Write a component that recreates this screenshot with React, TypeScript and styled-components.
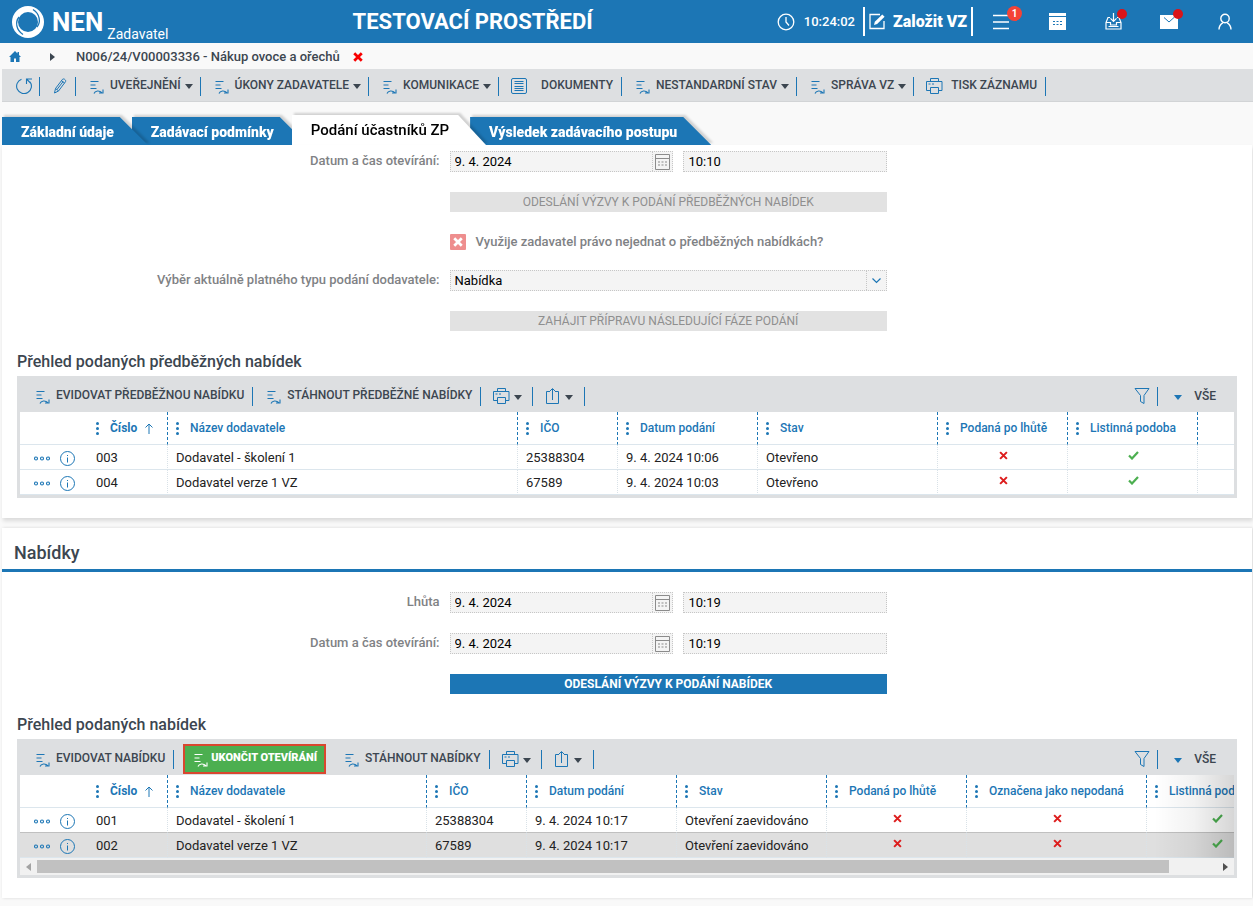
import React from 'react';
import styled, { createGlobalStyle, css } from 'styled-components';

const c = {
  blue: '#1c76b5',
  ink: '#3c4650',
  bar: '#dddfe1',
  page: '#f9f9f9',
  label: '#7f8285',
  red: '#dd1c1c',
  green: '#4caf50',
};

const Global = createGlobalStyle`
  *, *::before, *::after { box-sizing: border-box; }
  body {
    margin: 0;
    background: ${c.page};
    color: #222;
    font: 13px/16px Roboto, "Open Sans", sans-serif;
    overflow-x: hidden;
  }
  button, input, select { font: inherit; color: inherit; margin: 0; }
  button { border: 0; background: none; padding: 0; cursor: pointer; }
  svg { display: block; flex: none; }
  h1, h2, h3, p { margin: 0; }
`;

/* ---------- icons ---------- */

const Svg = ({ w = 16, h = 16, color = c.blue, sw = 1, children }: any) => (
  <svg width={w} height={h} viewBox={`0 0 ${w} ${h}`} fill="none" stroke={color} strokeWidth={sw} aria-hidden="true">
    {children}
  </svg>
);

const LogoMark = () => (
  <svg width="32" height="32" viewBox="0 0 32 32" aria-hidden="true">
    <circle cx="16" cy="16" r="16" fill="#fff" />
    <circle cx="16" cy="16" r="10" fill={c.blue} />
    <path d="M7 11C3 16 4 24 11 28.500" fill="none" stroke={c.blue} strokeWidth="1.300" />
    <path d="M25 21C29 16 28 8 21 3.500" fill="none" stroke={c.blue} strokeWidth="1.300" />
  </svg>
);

const ClockIcon = () => (
  <Svg w={18} h={18} color="#fff" sw={1.3}><circle cx="9" cy="9" r="7.800" /><path d="M9 4v5l3 3.500" /></Svg>
);
const EditIcon = () => (
  <Svg w={17} h={17} color="#fff" sw={1.3}>
    <path d="M11 1.500H1v14h14V8" />
    <path d="M5 12l.8-3.200 7.500-7.300 2.300 2.300-7.500 7.300z" fill="#fff" stroke="none" />
  </Svg>
);
const MenuIcon = () => <Svg w={18} h={16} color="#fff" sw={1.6}><path d="M1 1.500h16M1 8h16M1 14.500h16" /></Svg>;
const HeaderCalendarIcon = () => (
  <Svg w={17} h={17} color="none">
    <path d="M0 0h17v3H0zM0 4h17v13H0z" fill="#fff" />
    <path d="M4 8h2v1H4zM7.500 8h2v1h-2zM11 8h2v1h-2zM4 11h2v1H4zM7.500 11h2v1h-2zM11 11h2v1h-2z" fill={c.blue} />
  </Svg>
);
const InboxIcon = () => (
  <Svg w={17} h={17} color="#fff" sw={1.2}>
    <path d="M5 4.500H3L1 9.500v6.500h15V9.500l-2-5h-2M1 9.500h4.500V12h6V9.500H16M8.500 0v8M5.500 5.300l3 3 3-3M3.500 13.500h10" />
  </Svg>
);
const MailIcon = () => (
  <Svg w={18} h={14} color={c.blue} sw={1}><path d="M0 0h18v14H0z" fill="#fff" stroke="none" /><path d="M4 2.500l5 4.500 5-4.500" /></Svg>
);
const UserIcon = () => (
  <Svg w={14} h={17} color="#fff" sw={1.4}><circle cx="7" cy="5.500" r="4.200" /><path d="M1 16.500c0-4 2-5.500 4-6.800M13 16.500c0-4-2-5.500-4-6.800" /></Svg>
);
const HomeIcon = () => (
  <Svg w={12} h={11} color="none"><path d="M6 0L0 6h1.500v5H5V7.500h2V11h3.500V6H12L10 4V1H8.500v1.500z" fill={c.blue} /></Svg>
);
const CrossIcon = ({ size = 8, color = c.red, sw = 2.2 }: { size?: number; color?: string; sw?: number }) => (
  <svg width={size} height={size} viewBox="0 0 8 8" aria-hidden="true">
    <path d="M1 1l6 6M7 1L1 7" stroke={color} strokeWidth={sw} fill="none" />
  </svg>
);
const CheckIcon = () => <Svg w={11} h={9} color={c.green} sw={2.2}><path d="M1 4.500l3 3L10 1" /></Svg>;
const RefreshIcon = () => (
  <Svg sw={1.1}><path d="M5.500 1.200A7.400 7.400 0 1 0 14 3.800M16 1h-5.500v5M10.500 1l4 4" /></Svg>
);
const PencilIcon = () => (
  <Svg sw={1}><path d="M2.500 15l1-4.500L10.500 1.300c1.200-1.200 4 .8 3 2.400L6.500 13zM3.500 10.500l3 2.300M9.500 2.700l3 2.300M5 11.500l6-7.800" /></Svg>
);
const FlowIcon = ({ color = c.blue }: { color?: string }) => (
  <Svg color={color} sw={1.1}>
    <path d="M2.500 3.500h8M2.500 7h5M2.500 10.500h6" />
    <path d="M6 15.500c1-3 5.500-3.500 7.800-.8M15 11.500v3.500h-4" />
  </Svg>
);
const DocumentIcon = () => (
  <Svg w={17}><rect x="0.500" y="0.500" width="15" height="15" rx="1.500" /><path d="M3.500 3.500h9M3.500 5.500h9M3.500 8.500h9M3.500 10.500h9M3.500 12.500h9" /></Svg>
);
const PrinterIcon = () => (
  <Svg w={17}>
    <path d="M4.500 3.500v-3h8v3M4.500 12.500h-4v-9h15.500v9h-3.500M4.500 9.500h8v6h-8zM2.500 6h2M6 6h2" />
  </Svg>
);
const ShareIcon = () => <Svg><path d="M5 3.500H1.500v12h12v-12H10M7.500 12V1M4.500 3.500l3-3 3 3" /></Svg>;
const FilterIcon = () => <Svg><path d="M1 .5h14L10 7.500v8L6.500 13.500V7.500z" /></Svg>;
const CalendarIcon = () => (
  <Svg w={15} color="#8b8b8b">
    <path d="M.5 15.500V.5h14v15zM.5 4.500h14" />
    <path d="M3 8h2M6.500 8h2M10 8h2M3 11h2M6.500 11h2M10 11h2" />
  </Svg>
);
const ArrowUpIcon = () => <Svg w={8} h={11}><path d="M4 11V1M.5 4.500L4 1l3.500 3.500" /></Svg>;
const RowMenuIcon = () => <Svg w={16} h={5} sw={1.1}><circle cx="2" cy="2.500" r="1.500" /><circle cx="8" cy="2.500" r="1.500" /><circle cx="14" cy="2.500" r="1.500" /></Svg>;
const InfoIcon = () => <Svg w={15} h={15}><circle cx="7.500" cy="7.500" r="7" /><path d="M7.500 6.500v5M7.500 4v1" /></Svg>;
const DotsIcon = () => <Svg w={3} h={13} color="none"><g fill={c.blue}><circle cx="1.500" cy="1.500" r="1.500" /><circle cx="1.500" cy="6.500" r="1.500" /><circle cx="1.500" cy="11.500" r="1.500" /></g></Svg>;
const ChevronIcon = () => <Svg w={9} h={6} sw={1.2}><path d="M.5 .5l4 4 4-4" /></Svg>;

const Caret = styled.span<{ $color?: string }>`
  margin-top: 2px;
  border: 4px solid transparent;
  border-top: 5px solid ${p => p.$color || c.ink};
  border-bottom: 0;
`;

/* ---------- header ---------- */

const Header = styled.header`
  display: flex;
  align-items: center;
  height: 43px;
  background: ${c.blue};
  color: #fff;
`;
const Brand = styled.a`
  display: flex;
  align-items: center;
  gap: 8px;
  padding-left: 12px;
  color: #fff;
  text-decoration: none;
`;
const BrandName = styled.span`
  display: flex;
  align-items: flex-end;
  gap: 4px;
  font: 700 26px/32px Roboto, sans-serif;
`;
const BrandRole = styled.small`
  font: 400 14px/16px Roboto, sans-serif;
  margin-bottom: -4px;
`;
const EnvTitle = styled.h1`
  flex: 1;
  font: 700 22px/24px Roboto, sans-serif;
  text-align: center;
`;
const HeaderTools = styled.div`
  display: flex;
  align-items: center;
  justify-content: flex-end;
`;
const Clock = styled.time`
  display: flex;
  align-items: center;
  gap: 9px;
  margin-right: 8px;
  font-weight: 500;
`;
const CreateButton = styled.button`
  display: flex;
  align-items: center;
  gap: 7px;
  height: 29px;
  padding: 0 4px;
  border: solid #fff;
  border-width: 0 2px;
  font: 900 16px/20px Roboto, sans-serif;
`;
const IconButton = styled.button`
  display: flex;
  align-items: center;
  justify-content: center;
  position: relative;
  width: 56px;
  height: 43px;
`;
const Badge = styled.span<{ $dot?: boolean }>`
  position: absolute;
  border-radius: 50%;
  ${p => p.$dot
    ? css`top: 9px; left: 32px; width: 10px; height: 10px; background: #d9141a;`
    : css`top: 6px; left: 34px; width: 15px; height: 15px; background: #f44336; font: 700 10px/15px Roboto, sans-serif;`}
`;

const Breadcrumb = styled.nav`
  display: flex;
  align-items: center;
  height: 26px;
  padding: 1px 0 0 9px;
  color: ${c.ink};
  font-weight: 500;
`;
const CrumbArrow = styled.span`
  margin: 0 21px 0 29px;
  border: 4px solid transparent;
  border-left: 5px solid ${c.ink};
  border-right: 0;
`;
const CrumbClose = styled.button`
  margin-left: 13px;
`;

/* ---------- toolbars ---------- */

const Toolbar = styled.div<{ $grid?: boolean }>`
  display: flex;
  align-items: center;
  height: ${p => (p.$grid ? 36 : 33)}px;
  background: ${c.bar};
  ${p => p.$grid
    ? css`padding: 4px 18px 0 2px;`
    : css`margin-left: 2px; border-bottom: 1px solid #d2d4d6; padding: 2px 0 0 2px;`}
`;
const ToolButton = styled.button<{ $gap?: number; $end?: number }>`
  display: flex;
  align-items: center;
  gap: ${p => p.$gap || 6}px;
  height: 19px;
  padding: 0 ${p => p.$end || 7}px 0 12px;
  border-right: 1px solid ${c.blue};
  color: ${c.ink};
  font: 500 12px/16px Roboto, sans-serif;
  white-space: nowrap;
`;
const ToolLabel = styled.span`
  display: flex;
  align-items: center;
  gap: 4px;
  padding-bottom: 2px;
`;
const HighlightButton = styled(ToolButton)`
  height: 30px;
  margin: 0 5px 0 9px;
  padding: 0 7px;
  gap: 3px;
  border: 2px solid #d9472f;
  background: ${c.green};
  color: #fff;
  font-size: 11px;
  font-weight: 900;
`;
const Spacer = styled.span`
  flex: 1;
`;
const AllButton = styled.button`
  display: flex;
  align-items: center;
  gap: 12px;
  padding-left: 16px;
  color: ${c.ink};
  font: 500 12px/16px Roboto, sans-serif;
`;

/* ---------- tabs ---------- */

const Tabs = styled.nav`
  display: flex;
  align-items: flex-end;
  height: 43px;
  padding-left: 2px;
`;
const TabShadow = styled.div<{ $z: number }>`
  position: relative;
  z-index: ${p => p.$z};
  margin-right: -16px;
  filter: drop-shadow(2px -2px 1px rgba(0, 0, 0, 0.16));
`;
const Tab = styled.a<{ $active?: boolean }>`
  display: block;
  height: ${p => (p.$active ? '30px' : '28px')};
  padding: ${p => (p.$active ? '0 37px 0 19px' : '0 34px 0 19px')};
  clip-path: polygon(0 0, calc(100% - 28px) 0, 100% 100%, 0 100%);
  background: ${p => (p.$active ? '#fff' : c.blue)};
  color: ${p => (p.$active ? '#000' : '#fff')};
  font: ${p => (p.$active ? '500 15px/30px' : '900 14px/31px')} Roboto, sans-serif;
  text-decoration: none;
  white-space: nowrap;
`;

/* ---------- content ---------- */

const Panel = styled.section`
  margin: 0 1px 10px 2px;
  padding-bottom: 20px;
  background: #fff;
  box-shadow: 1px 0 3px rgba(0, 0, 0, 0.14);
`;
const FirstPanel = styled(Panel)`
  position: relative;
  z-index: 9;
  padding-top: 6px;
  box-shadow: 1px 3px 4px rgba(0, 0, 0, 0.12);
`;
const PanelTitle = styled.h2`
  padding: 13px 12px 4px;
  margin-bottom: 20px;
  border-bottom: 3px solid ${c.blue};
  color: ${c.ink};
  font: 500 18px/24px Roboto, sans-serif;
`;
const Form = styled.div`
  display: grid;
  gap: 20px;
`;
const FormRow = styled.div`
  display: grid;
  grid-template-columns: 35% 35%;
  column-gap: 10px;
  align-items: center;
`;
const Label = styled.label`
  grid-column: 1;
  justify-self: end;
  padding-bottom: 2px;
  color: ${c.label};
  font-weight: 500;
`;
const Fields = styled.div`
  grid-column: 2;
  display: grid;
  grid-template-columns: 11fr 10fr;
  gap: 10px;
`;
const Field = styled.div`
  display: flex;
  position: relative;
  height: 21px;
  min-width: 0;
  border: 1px dotted #c6c6c6;
  background: #f4f4f4;
  color: #000;
`;
const SelectField = styled(Field)`
  grid-column: 2;
`;
const TextInput = styled.input`
  flex: 1;
  min-width: 0;
  border: 0;
  padding: 0 4px;
  background: transparent;
  outline: 0;
`;
const CalendarButton = styled.button`
  width: 20px;
  padding-left: 2px;
  border-left: 1px dotted #c6c6c6;
`;
const Select = styled.select`
  flex: 1;
  appearance: none;
  border: 0;
  padding: 0 4px;
  background: transparent;
`;
const SelectArrow = styled.span`
  position: absolute;
  top: 0;
  right: 0;
  bottom: 0;
  display: flex;
  align-items: center;
  justify-content: center;
  width: 20px;
  border-left: 1px dotted #c6c6c6;
  pointer-events: none;
`;
const WideButton = styled.button<{ $primary?: boolean }>`
  grid-column: 2;
  height: 20px;
  background: ${p => (p.$primary ? c.blue : '#e2e2e2')};
  color: ${p => (p.$primary ? '#fff' : '#8f8f8f')};
  font: ${p => (p.$primary ? 700 : 400)} 12px/20px Roboto, sans-serif;
`;
const CheckLabel = styled.label`
  grid-column: 2;
  display: flex;
  align-items: center;
  gap: 10px;
  margin: 1px 0 -1px;
  height: 18px;
  color: ${c.label};
  font-weight: 500;
`;
const CheckWrap = styled.span`
  position: relative;
  display: flex;
`;
const CheckBox = styled.input`
  appearance: none;
  width: 16px;
  height: 16px;
  margin: 0;
  border-radius: 1px;
  background: #ee8e8e;
`;
const CheckMark = styled.span`
  position: absolute;
  inset: 0;
  display: grid;
  place-items: center;
  pointer-events: none;
`;
const GridTitle = styled.h3`
  margin: 21px 15px 4px;
  color: ${c.ink};
  font: 500 16px/20px Roboto, sans-serif;
`;

/* ---------- data grid ---------- */

const GridBox = styled.div`
  margin: 0 15px;
  border: solid ${c.bar};
  border-width: 0 3px 3px;
  background: #fff;
`;
const TableViewport = styled.div<{ $fade?: boolean }>`
  position: relative;
  overflow: hidden;
  ${p => p.$fade && css`
    &::after {
      content: '';
      position: absolute;
      top: 0;
      right: 0;
      bottom: 0;
      width: 80px;
      background: linear-gradient(to right, rgba(0, 0, 0, 0), rgba(0, 0, 0, 0.05) 50%, rgba(0, 0, 0, 0.16));
      pointer-events: none;
    }
  `}
`;
const Table = styled.table<{ $wide?: boolean }>`
  width: ${p => (p.$wide ? '1267px' : '100%')};
  min-width: 1214px;
  table-layout: fixed;
  border-collapse: separate;
  border-spacing: 0;
`;
const Th = styled.th<{ $edge?: boolean }>`
  height: 33px;
  padding: 0 0 0 8px;
  border-bottom: 1px solid #dce6ed;
  border-right: ${p => (p.$edge ? `1px dashed ${c.blue}` : '0')};
  color: ${c.blue};
  font: 500 12px/16px Roboto, sans-serif;
  text-align: left;
  white-space: nowrap;
`;
const HeadContent = styled.span`
  display: flex;
  align-items: center;
  gap: 11px;
`;
const SortContent = styled.span`
  display: flex;
  gap: 8px;
  align-items: center;
  font-weight: 700;
`;
const Tr = styled.tr<{ $selected?: boolean; $before?: boolean }>`
  background: ${p => (p.$selected ? '#dfdfdf' : '#fff')};
  --line: ${p => (p.$before ? '#c0c0c0' : '#dce6ed')};
`;
const Td = styled.td<{ $edge?: boolean }>`
  height: 25px;
  padding: 2px 0 0 8px;
  border-bottom: 1px solid var(--line);
  border-right: ${p => (p.$edge ? '1px dotted #d9e2e8' : '0')};
  color: #222;
  white-space: nowrap;
`;
const RowActions = styled.span`
  display: flex;
  align-items: center;
  gap: 10px;
  padding-left: 6px;
`;
const Flag = styled.span`
  display: flex;
  justify-content: center;
  padding: 0 7px 5px 0;
`;
const ScrollTrack = styled.div`
  display: flex;
  align-items: center;
  gap: 6px;
  height: 17px;
  padding: 0 6px;
  background: #f1f1f1;
`;
const ScrollRail = styled.div`
  flex: 1;
  padding-right: 4%;
`;
const ScrollThumb = styled.div`
  height: 13px;
  background: #c1c1c1;
`;
const ScrollArrow = styled.button<{ $right?: boolean }>`
  border: 4px solid transparent;
  ${p => p.$right
    ? css`border-left: 5px solid #505050; border-right: 0;`
    : css`border-right: 5px solid #a3a3a3; border-left: 0;`}
`;

type Column = { title: string; width: number };
type Row = { id: string; name: string; ico: string; date: string; state: string; flags: boolean[] };

const FlowItem = ({ children, menu }: { children: string; menu?: boolean }) => (
  <ToolButton $end={menu ? 7 : 8}>
    <FlowIcon />
    <ToolLabel>{children}{menu && <Caret />}</ToolLabel>
  </ToolButton>
);

const GridTools = () => (
  <>
    <ToolButton $gap={4} $end={10} aria-label="Tisk"><PrinterIcon /><Caret /></ToolButton>
    <ToolButton $gap={4} $end={11} aria-label="Export"><ShareIcon /><Caret /></ToolButton>
    <Spacer />
    <ToolButton $end={7} aria-label="Filtr"><FilterIcon /></ToolButton>
    <AllButton><Caret $color={c.blue} />VŠE</AllButton>
  </>
);

const DataTable = ({ columns, rows, selected, wide }: { columns: Column[]; rows: Row[]; selected?: string; wide?: boolean }) => (
  <TableViewport $fade={wide}>
    <Table $wide={wide}>
      <colgroup>
        <col style={{ width: 68 }} />
        {columns.map(col => <col key={col.title} style={{ width: col.width }} />)}
        {!wide && <col />}
      </colgroup>
      <thead>
        <tr>
          <Th />
          {columns.map((col, i) => (
            <Th key={col.title} $edge scope="col">
              <HeadContent>
                <DotsIcon />
                {i === 0 ? <SortContent>{col.title}<ArrowUpIcon /></SortContent> : col.title}
              </HeadContent>
            </Th>
          ))}
          {!wide && <Th />}
        </tr>
      </thead>
      <tbody>
        {rows.map((row, i) => (
          <Tr key={row.id} $selected={row.id === selected} $before={!!selected && rows[i + 1]?.id === selected}>
            <Td>
              <RowActions>
                <button aria-label="Akce"><RowMenuIcon /></button>
                <button aria-label="Informace"><InfoIcon /></button>
              </RowActions>
            </Td>
            <Td $edge>{row.id}</Td>
            <Td $edge>{row.name}</Td>
            <Td $edge>{row.ico}</Td>
            <Td $edge>{row.date}</Td>
            <Td $edge>{row.state}</Td>
            {row.flags.map((on, k) => (
              <Td key={k} $edge><Flag>{on ? <CheckIcon /> : <CrossIcon size={9} sw={1.8} />}</Flag></Td>
            ))}
            {!wide && <Td />}
          </Tr>
        ))}
      </tbody>
    </Table>
  </TableViewport>
);

const DateRow = ({ id, label, date, time }: { id: string; label: string; date: string; time: string }) => (
  <FormRow>
    <Label htmlFor={id}>{label}</Label>
    <Fields>
      <Field>
        <TextInput id={id} value={date} readOnly />
        <CalendarButton aria-label="Kalendář"><CalendarIcon /></CalendarButton>
      </Field>
      <Field><TextInput aria-label={`${label} čas`} value={time} readOnly /></Field>
    </Fields>
  </FormRow>
);

const preliminaryColumns: Column[] = [
  { title: 'Číslo', width: 80 },
  { title: 'Název dodavatele', width: 350 },
  { title: 'IČO', width: 100 },
  { title: 'Datum podání', width: 140 },
  { title: 'Stav', width: 180 },
  { title: 'Podaná po lhůtě', width: 130 },
  { title: 'Listinná podoba', width: 130 },
];
const preliminaryRows: Row[] = [
  { id: '003', name: 'Dodavatel - školení 1', ico: '25388304', date: '9. 4. 2024 10:06', state: 'Otevřeno', flags: [false, true] },
  { id: '004', name: 'Dodavatel verze 1 VZ', ico: '67589', date: '9. 4. 2024 10:03', state: 'Otevřeno', flags: [false, true] },
];
const offerColumns: Column[] = [
  { title: 'Číslo', width: 80 },
  { title: 'Název dodavatele', width: 259 },
  { title: 'IČO', width: 100 },
  { title: 'Datum podání', width: 150 },
  { title: 'Stav', width: 150 },
  { title: 'Podaná po lhůtě', width: 140 },
  { title: 'Označena jako nepodaná', width: 180 },
  { title: 'Listinná podoba', width: 140 },
];
const offerRows: Row[] = [
  { id: '001', name: 'Dodavatel - školení 1', ico: '25388304', date: '9. 4. 2024 10:17', state: 'Otevření zaevidováno', flags: [false, false, true] },
  { id: '002', name: 'Dodavatel verze 1 VZ', ico: '67589', date: '9. 4. 2024 10:17', state: 'Otevření zaevidováno', flags: [false, false, true] },
];

export default function App() {
  return (
    <>
      <Global />
      <Header>
        <Brand href="#">
          <LogoMark />
          <BrandName>NEN<BrandRole>Zadavatel</BrandRole></BrandName>
        </Brand>
        <EnvTitle>TESTOVACÍ PROSTŘEDÍ</EnvTitle>
        <HeaderTools>
          <Clock><ClockIcon />10:24:02</Clock>
          <CreateButton><EditIcon />Založit VZ</CreateButton>
          <IconButton aria-label="Nabídka"><MenuIcon /><Badge>1</Badge></IconButton>
          <IconButton aria-label="Kalendář"><HeaderCalendarIcon /></IconButton>
          <IconButton aria-label="Doručené"><InboxIcon /><Badge $dot /></IconButton>
          <IconButton aria-label="Zprávy"><MailIcon /><Badge $dot /></IconButton>
          <IconButton aria-label="Uživatel"><UserIcon /></IconButton>
        </HeaderTools>
      </Header>

      <Breadcrumb>
        <a href="#" aria-label="Domů"><HomeIcon /></a>
        <CrumbArrow />
        N006/24/V00003336 - Nákup ovoce a ořechů
        <CrumbClose aria-label="Zavřít"><CrossIcon size={10} color="#f80000" /></CrumbClose>
      </Breadcrumb>

      <Toolbar>
        <ToolButton aria-label="Obnovit"><RefreshIcon /></ToolButton>
        <ToolButton aria-label="Upravit"><PencilIcon /></ToolButton>
        <FlowItem menu>UVEŘEJNĚNÍ</FlowItem>
        <FlowItem menu>ÚKONY ZADAVATELE</FlowItem>
        <FlowItem menu>KOMUNIKACE</FlowItem>
        <ToolButton $gap={13} $end={8}><DocumentIcon /><ToolLabel>DOKUMENTY</ToolLabel></ToolButton>
        <FlowItem menu>NESTANDARDNÍ STAV</FlowItem>
        <FlowItem menu>SPRÁVA VZ</FlowItem>
        <ToolButton $gap={8} $end={8}><PrinterIcon /><ToolLabel>TISK ZÁZNAMU</ToolLabel></ToolButton>
      </Toolbar>

      <Tabs>
        <TabShadow $z={3}><Tab href="#">Základní údaje</Tab></TabShadow>
        <TabShadow $z={2}><Tab href="#">Zadávací podmínky</Tab></TabShadow>
        <TabShadow $z={4}><Tab href="#" $active aria-current="page">Podání účastníků ZP</Tab></TabShadow>
        <TabShadow $z={1}><Tab href="#">Výsledek zadávacího postupu</Tab></TabShadow>
      </Tabs>

      <main>
        <FirstPanel>
          <Form>
            <DateRow id="open-pre" label="Datum a čas otevírání:" date="9. 4. 2024" time="10:10" />
            <FormRow><WideButton>ODESLÁNÍ VÝZVY K PODÁNÍ PŘEDBĚŽNÝCH NABÍDEK</WideButton></FormRow>
            <FormRow>
              <CheckLabel>
                <CheckWrap>
                  <CheckBox type="checkbox" />
                  <CheckMark><CrossIcon size={10} color="#fff" /></CheckMark>
                </CheckWrap>
                Využije zadavatel právo nejednat o předběžných nabídkách?
              </CheckLabel>
            </FormRow>
            <FormRow>
              <Label htmlFor="kind">Výběr aktuálně platného typu podání dodavatele:</Label>
              <SelectField>
                <Select id="kind" defaultValue="Nabídka"><option>Nabídka</option></Select>
                <SelectArrow><ChevronIcon /></SelectArrow>
              </SelectField>
            </FormRow>
            <FormRow><WideButton>ZAHÁJIT PŘÍPRAVU NÁSLEDUJÍCÍ FÁZE PODÁNÍ</WideButton></FormRow>
          </Form>
          <GridTitle>Přehled podaných předběžných nabídek</GridTitle>
          <GridBox>
            <Toolbar $grid>
              <FlowItem>EVIDOVAT PŘEDBĚŽNOU NABÍDKU</FlowItem>
              <FlowItem>STÁHNOUT PŘEDBĚŽNÉ NABÍDKY</FlowItem>
              <GridTools />
            </Toolbar>
            <DataTable columns={preliminaryColumns} rows={preliminaryRows} />
          </GridBox>
        </FirstPanel>

        <Panel>
          <PanelTitle>Nabídky</PanelTitle>
          <Form>
            <DateRow id="deadline" label="Lhůta" date="9. 4. 2024" time="10:19" />
            <DateRow id="open-offers" label="Datum a čas otevírání:" date="9. 4. 2024" time="10:19" />
            <FormRow><WideButton $primary>ODESLÁNÍ VÝZVY K PODÁNÍ NABÍDEK</WideButton></FormRow>
          </Form>
          <GridTitle>Přehled podaných nabídek</GridTitle>
          <GridBox>
            <Toolbar $grid>
              <FlowItem>EVIDOVAT NABÍDKU</FlowItem>
              <HighlightButton><FlowIcon color="#fff" /><ToolLabel>UKONČIT OTEVÍRÁNÍ</ToolLabel></HighlightButton>
              <FlowItem>STÁHNOUT NABÍDKY</FlowItem>
              <GridTools />
            </Toolbar>
            <DataTable columns={offerColumns} rows={offerRows} selected="002" wide />
            <ScrollTrack>
              <ScrollArrow aria-label="Posunout vlevo" />
              <ScrollRail><ScrollThumb /></ScrollRail>
              <ScrollArrow $right aria-label="Posunout vpravo" />
            </ScrollTrack>
          </GridBox>
        </Panel>
      </main>
    </>
  );
}
